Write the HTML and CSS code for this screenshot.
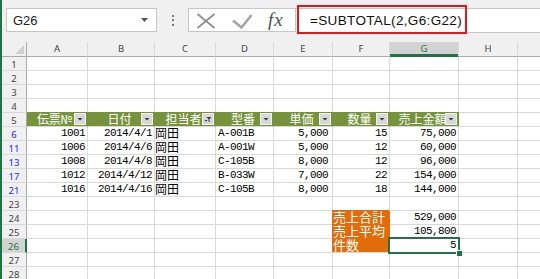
FILE: index.html
```html
<!DOCTYPE html>
<html lang="ja">
<head>
  <meta charset="UTF-8" />
  <title>SUBTOTAL</title>
  <link rel="stylesheet" href="styles.css">
</head>
<body>
  <div class="app">
    <div class="toolbar">
      <div class="namebox">
        <span>G26</span>
        <svg class="caret" width="7" height="4" viewBox="0 0 7 4"><path d="M0 0h7l-3.5 4z" fill="#555"/></svg>
      </div>
      <div class="dots"><i></i><i></i><i></i></div>
      <div class="fxbar">
        <svg class="ico-x" width="18" height="22" viewBox="0 0 18 22"><path d="M0.5 5L17.5 19M17.5 5L0.5 19" stroke="#8e8e8e" stroke-width="1.8" fill="none"/></svg>
        <svg class="ico-ok" width="21" height="22" viewBox="0 0 21 22"><path d="M1 11.5L9.5 18.5L19.5 6" stroke="#a3a3a3" stroke-width="2.6" fill="none"/></svg>
        <span class="fx">fx</span>
      </div>
      <div class="formula">
        <div class="formula-hl">=SUBTOTAL(2,G6:G22)</div>
      </div>
    </div>

    <div class="sheet">
      <div class="row head">
        <span class="corner"><svg width="9" height="9" viewBox="0 0 9 9"><path d="M9 0v9h-9z" fill="#cfcfcf"/></svg></span>
        <span class="ch">A</span><span class="ch">B</span><span class="ch">C</span><span class="ch">D</span>
        <span class="ch">E</span><span class="ch">F</span><span class="ch sel">G</span><span class="ch">H</span><span class="ch"></span>
      </div>

      <div class="row"><span class="rh">1</span><span></span><span></span><span></span><span></span><span></span><span></span><span></span><span></span><span></span></div>
      <div class="row"><span class="rh">2</span><span></span><span></span><span></span><span></span><span></span><span></span><span></span><span></span><span></span></div>
      <div class="row"><span class="rh">3</span><span></span><span></span><span></span><span></span><span></span><span></span><span></span><span></span><span></span></div>
      <div class="row"><span class="rh">4</span><span></span><span></span><span></span><span></span><span></span><span></span><span></span><span></span><span></span></div>

      <div class="row">
        <span class="rh">5</span>
        <span class="th first">伝票№<i class="btn"><svg width="10" height="10" viewBox="0 0 10 10"><path d="M2.5 4h5l-2.5 2.5z"/></svg></i></span>
        <span class="th">日付<i class="btn"><svg width="10" height="10" viewBox="0 0 10 10"><path d="M2.5 4h5l-2.5 2.5z"/></svg></i></span>
        <span class="th">担当者<i class="btn"><svg width="10" height="10" viewBox="0 0 10 10"><path d="M3.5 3h5l-2 2.2v2.8h-1v-2.8z"/><path d="M1.5 6h3l-1.5 1.8z"/></svg></i></span>
        <span class="th">型番<i class="btn"><svg width="10" height="10" viewBox="0 0 10 10"><path d="M2.5 4h5l-2.5 2.5z"/></svg></i></span>
        <span class="th">単価<i class="btn"><svg width="10" height="10" viewBox="0 0 10 10"><path d="M2.5 4h5l-2.5 2.5z"/></svg></i></span>
        <span class="th">数量<i class="btn"><svg width="10" height="10" viewBox="0 0 10 10"><path d="M2.5 4h5l-2.5 2.5z"/></svg></i></span>
        <span class="th">売上金額<i class="btn"><svg width="10" height="10" viewBox="0 0 10 10"><path d="M2.5 4h5l-2.5 2.5z"/></svg></i></span>
        <span></span><span></span>
      </div>

      <div class="row">
        <span class="rh f">6</span>
        <span class="num">1001</span><span class="num">2014/4/1</span><span class="jp">岡田</span><span class="txt">A-001B</span>
        <span class="num pad">5,000</span><span class="num">15</span><span class="num">75,000</span><span></span><span></span>
      </div>
      <div class="row">
        <span class="rh f">11</span>
        <span class="num">1006</span><span class="num">2014/4/6</span><span class="jp">岡田</span><span class="txt">A-001W</span>
        <span class="num pad">5,000</span><span class="num">12</span><span class="num">60,000</span><span></span><span></span>
      </div>
      <div class="row">
        <span class="rh f">13</span>
        <span class="num">1008</span><span class="num">2014/4/8</span><span class="jp">岡田</span><span class="txt">C-105B</span>
        <span class="num pad">8,000</span><span class="num">12</span><span class="num">96,000</span><span></span><span></span>
      </div>
      <div class="row">
        <span class="rh f">17</span>
        <span class="num">1012</span><span class="num">2014/4/12</span><span class="jp">岡田</span><span class="txt">B-033W</span>
        <span class="num pad">7,000</span><span class="num">22</span><span class="num">154,000</span><span></span><span></span>
      </div>
      <div class="row">
        <span class="rh f">21</span>
        <span class="num">1016</span><span class="num">2014/4/16</span><span class="jp">岡田</span><span class="txt">C-105B</span>
        <span class="num pad">8,000</span><span class="num">18</span><span class="num">144,000</span><span></span><span></span>
      </div>

      <div class="row"><span class="rh">23</span><span></span><span></span><span></span><span></span><span></span><span></span><span></span><span></span><span></span></div>
      <div class="row">
        <span class="rh">24</span><span></span><span></span><span></span><span></span><span></span>
        <span class="sum">売上合計</span><span class="num">529,000</span><span></span><span></span>
      </div>
      <div class="row">
        <span class="rh">25</span><span></span><span></span><span></span><span></span><span></span>
        <span class="sum">売上平均</span><span class="num">105,800</span><span></span><span></span>
      </div>
      <div class="row">
        <span class="rh sel">26</span><span></span><span></span><span></span><span></span><span></span>
        <span class="sum last">件数</span><span class="num active">5<i class="cursor"><i class="handle"></i></i></span><span></span><span></span>
      </div>
      <div class="row"><span class="rh">27</span><span></span><span></span><span></span><span></span><span></span><span></span><span></span><span></span><span></span></div>
      <div class="row"><span class="rh">28</span><span></span><span></span><span></span><span></span><span></span><span></span><span></span><span></span><span></span></div>
    </div>
  </div>
</body>
</html>
```

FILE: styles.css
```css
body {
  margin: 0;
  background-color: #f0f0f0;
  font-family: "Liberation Sans", Arial, sans-serif;
  overflow: hidden;
}

.app {
  height: 279px;
  border-left: 2px solid #217346;
  overflow: hidden;
}

/* name box + formula bar */
.toolbar {
  height: 42px;
  display: flex;
  align-items: flex-start;
  padding-top: 8px;
  box-sizing: border-box;
}

.namebox {
  margin-left: 4px;
  width: 151px;
  height: 24px;
  box-sizing: border-box;
  border: 1px solid #c6c6c6;
  background: #fff;
  display: flex;
  align-items: center;
  padding: 0 8px 0 6px;
  font-size: 13px;
  color: #222;
}

.caret {
  margin-left: auto;
}

.dots {
  width: 31px;
  height: 24px;
  display: flex;
  flex-direction: column;
  align-items: center;
  justify-content: center;
  gap: 2.5px;
}

.dots i {
  width: 2px;
  height: 2px;
  background: #7a7a7a;
}

.fxbar {
  width: 108px;
  height: 24px;
  box-sizing: border-box;
  border: 1px solid #c6c6c6;
  background: #fff;
  display: flex;
  align-items: center;
  padding-left: 8px;
}

.ico-ok {
  margin-left: 17px;
}

.fx {
  margin-left: 15px;
  font-family: "Liberation Serif", serif;
  font-style: italic;
  font-size: 19px;
  letter-spacing: 1px;
  line-height: 22px;
  color: #505050;
}

.formula {
  flex: 1;
  height: 25px;
  box-sizing: border-box;
  border-top: 1px solid #c6c6c6;
  border-bottom: 1px solid #c6c6c6;
  background: #fff;
}

.formula-hl {
  margin: -4px 0 0 1px;
  width: 170px;
  height: 29px;
  box-sizing: border-box;
  border: 2px solid #e8141a;
  padding: 4px 0 0 11px;
  font-size: 13.5px;
  letter-spacing: 0.35px;
  line-height: 20px;
  color: #111;
  white-space: nowrap;
}

/* grid */
.sheet {
  background: #fff;
}

.row {
  display: grid;
  grid-template-columns: 25px 61px 67px 61px 58px 59px 57px 69px 59px 1fr;
  height: 14px;
}

.row > span {
  box-sizing: border-box;
  border-right: 1px solid #d9d9d9;
  border-bottom: 1px solid #d9d9d9;
  white-space: nowrap;
  overflow: hidden;
}

.row > span:last-child {
  border-right: 0;
}

.row.head {
  height: 15px;
}

.corner {
  background: #f0f0f0;
  display: flex;
  justify-content: flex-end;
  align-items: flex-end;
  padding: 0 2px 2px 0;
  border-right-color: #ababab !important;
  border-bottom-color: #ababab !important;
}

.ch {
  background: #f0f0f0;
  border-bottom-color: #ababab !important;
  font-family: "Noto Sans", sans-serif;
  font-size: 9.5px;
  line-height: 14px;
  text-align: center;
  color: #444;
}

.ch.sel {
  background: #d3d3d3;
  color: #217346;
  border-bottom-color: #217346 !important;
  box-shadow: inset 0 -2px 0 #217346;
}

.rh {
  background: #f0f0f0;
  border-right-color: #ababab !important;
  font-family: "Noto Sans", sans-serif;
  font-size: 9.5px;
  line-height: 13px;
  padding-top: 1px;
  text-align: center;
  color: #444;
}

.rh.f {
  color: #1f1fff;
}

.rh.sel {
  background: #d3d3d3;
  color: #217346;
  border-right: 2px solid #217346 !important;
}

/* table header */
.row > .th {
  position: relative;
  overflow: visible;
  background: #76933c;
  border-right-color: #76933c;
  box-shadow: 0 -1px 0 #76933c;
  color: #fff;
  font-family: "Noto Sans CJK JP", sans-serif;
  font-size: 12px;
  line-height: 11px;
  text-align: center;
  padding-right: 3px;
}

.row > .th.first {
  padding-right: 5px;
  letter-spacing: -0.3px;
}

.row > .th:nth-child(8) {
  overflow: hidden;
}

.btn {
  position: absolute;
  top: 0;
  right: 1px;
  width: 12px;
  height: 12px;
  box-sizing: border-box;
  border: 1px solid #f0f0f0;
  background: #d8d8d8;
  display: flex;
}

.btn svg {
  fill: #3c3c3c;
}

/* cells */
.num {
  font-family: "Liberation Mono", monospace;
  font-size: 11px;
  letter-spacing: -0.6px;
  line-height: 13px;
  text-align: right;
  padding-right: 2px;
  color: #000;
}

.num.pad {
  padding-right: 4px;
}

.txt {
  font-family: "Liberation Mono", monospace;
  font-size: 11px;
  letter-spacing: -0.6px;
  line-height: 13px;
  padding-left: 2px;
  color: #000;
}

.row > .jp {
  overflow: visible;
  font-family: "Noto Sans CJK JP", sans-serif;
  font-size: 12px;
  line-height: 11px;
  color: #000;
}

.row > .sum {
  overflow: visible;
  background: #e26b0a;
  border-color: #e26b0a;
  box-shadow: -1px -1px 0 #e26b0a;
  color: #fff;
  font-family: "Noto Sans CJK JP", sans-serif;
  font-size: 13px;
  line-height: 11px;
}

.row > .sum.last {
  border-bottom-color: #d9d9d9;
}

.row > .active {
  position: relative;
  overflow: visible;
}

.cursor {
  position: absolute;
  inset: -2px;
  border: 2px solid #217346;
  z-index: 2;
}

.handle {
  position: absolute;
  right: -4px;
  bottom: -4px;
  width: 6px;
  height: 6px;
  box-sizing: border-box;
  background: #217346;
  border-left: 1px solid #fff;
  border-top: 1px solid #fff;
}
```
